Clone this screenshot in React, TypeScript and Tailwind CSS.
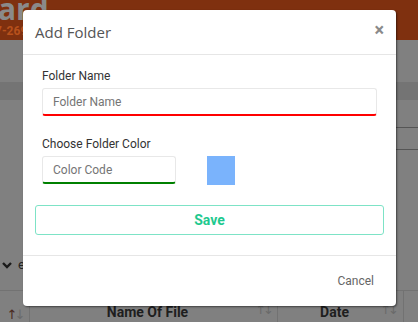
import React from "react";

function Arrows({ dark }: { dark?: boolean }) {
  return (
    <span className="text-[13px] leading-none tracking-[-3px]" style={{ fontFamily: "'DejaVu Sans', sans-serif" }}>
      <span className={dark ? "text-[#4a2a20]" : "text-[#6a6a6a]"}>↑</span>
      <span className="text-[#6a6a6a]">↓</span>
    </span>
  );
}

export default function App() {
  return (
    <div
      className="relative w-[418px] h-[322px] overflow-hidden bg-[#808080]"
      style={{ fontFamily: "Roboto, 'Liberation Sans', sans-serif" }}
    >
      {/* background page (dimmed) */}
      <div className="flex flex-col h-full">
        <div className="h-[40px] bg-[#7f300f] flex flex-col pl-0 overflow-hidden">
          <div className="h-[22px] text-[30px] font-bold leading-[22px] text-[#8a8a8a] ml-[-2px] mt-[-2px] overflow-visible" style={{ fontFamily: "'Open Sans', sans-serif" }}>
            ard
          </div>
          <div className="text-[12px] font-bold leading-none text-[#b8511c] ml-[-5px] mt-[5px]">7-269</div>
        </div>
        <div className="h-[42px]" />
        <div className="h-[18px] bg-[#747474]" />
        <div className="relative h-[190px]">
          <div className="absolute right-0 top-[27px] w-[120px] border-t border-[#555]" />
          <div className="absolute right-0 top-[49px] w-[120px] border-t border-[#555]" />
          <div className="absolute left-[1px] top-[155px] flex items-center gap-[5px] text-[#222]">
            <svg width="12" height="10" viewBox="0 0 12 10">
              <path d="M2 3 L6 7 L10 3" stroke="#1a1a1a" strokeWidth="2.4" fill="none" />
            </svg>
            <span className="text-[13px]">e</span>
          </div>
        </div>
        <div className="flex-1 border-t border-[#727272] flex items-stretch text-[#1e1e1e]">
          <div className="w-[30px] flex items-end justify-center border-r border-[#727272] pb-[1px]">
            <Arrows dark />
          </div>
          <div className="w-[248px] flex items-end border-r border-[#727272] relative">
            <span className="flex-1 text-center text-[14px] leading-[20px] font-bold pr-[12px]">Name Of File</span>
            <span className="absolute right-[6px] bottom-[1px]"><Arrows /></span>
          </div>
          <div className="w-[126px] flex items-end border-r border-[#727272] relative">
            <span className="flex-1 text-center text-[14px] leading-[20px] font-bold pr-[12px]">Date</span>
            <span className="absolute right-[7px] bottom-[1px]"><Arrows /></span>
          </div>
          <div className="flex-1" />
        </div>
      </div>

      {/* modal */}
      <div className="absolute left-[23px] top-[10px] w-[373px] h-[296px] bg-white rounded-[4px] shadow-[1px_1px_2px_rgba(0,0,0,0.5)] flex flex-col">
        <div className="h-[45px] shrink-0 border-b border-[#e6e6e6] flex items-center justify-between pl-[12px] pr-[12px]">
          <span className="text-[15px] text-[#555] pt-[1px]" style={{ fontFamily: "'Open Sans', sans-serif" }}>
            Add Folder
          </span>
          <span className="text-[18px] font-bold text-[#8a8a8a] leading-none mt-[-4px]">×</span>
        </div>
        <div className="px-[12px] pt-[13px] pb-[20px] border-b border-[#e6e6e6]">
          <div className="px-[7px]">
            <div className="text-[12px] leading-[16px] text-[#333]">Folder Name</div>
            <div className="mt-[4px] h-[28px] border border-[#e8e8e8] border-b-2 border-b-[#ff0000] rounded-[3px] flex items-center pl-[10px] text-[12px] text-[#757575]">
              Folder Name
            </div>
            <div className="mt-[20px] text-[12px] leading-[16px] text-[#333]">Choose Folder Color</div>
            <div className="mt-[4px] flex items-start gap-[31px]">
              <div className="w-[134px] h-[28px] border border-[#e8e8e8] border-b-2 border-b-[#008000] rounded-[3px] flex items-center pl-[10px] text-[12px] text-[#757575]">
                Color Code
              </div>
              <div className="w-[28px] h-[29px] bg-[#7ab3fc]" />
            </div>
          </div>
          <div className="mt-[20px] h-[30px] border border-[#7de3c6] rounded-[3px] flex items-center justify-center text-[14px] font-bold text-[#1fc98f]">
            Save
          </div>
        </div>
        <div className="flex-1 flex items-center justify-end pr-[22px]">
          <span className="text-[12px] text-[#666]">Cancel</span>
        </div>
      </div>
    </div>
  );
}
